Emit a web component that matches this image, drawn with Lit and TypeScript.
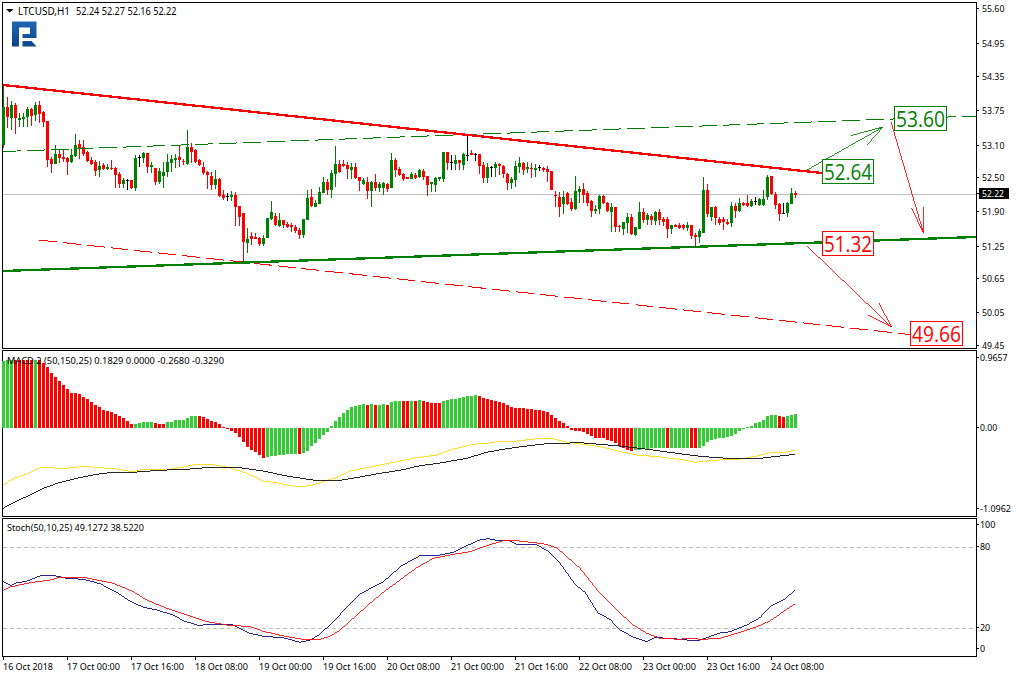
import { LitElement, html, svg, css } from "lit";
import { customElement } from "lit/decorators.js";

const GREEN = "#008000";
const RED = "#ff0000";

// Candles: colour + high, body top, body bottom, low, in 3x crop coordinates.
const C1 = `g255,320,435,443 r290,322,352,385 g303,315,353,390 r310,315,355,402 g340,353,360,382 g340,350,357,380 g320,326,350,380 r325,327,348,378 g305,315,345,362 r303,315,343,370 r332,335,365,380 r363,363,480,500 r470,477,492,518 g435,462,492,492 r450,462,474,488 r450,472,478,487 r472,474,486,525 g447,465,485,490 g402,435,468,472 r420,433,445,478 r420,442,462,468 r452,456,484,486 r470,481,493,495 r480,485,512,528 g483,498,510,530 r490,494,507,510 g492,501,507,510 r480,503,508,510 r500,504,524,565 r515,523,553,565 g535,540,551,565 k537,541,542,570 r540,540,563,567 g465,474,565,572 k465,472,473,500 g455,459,473,490 r460,460,502,518 g485,495,500,520 r503,503,545,555 g505,513,546,552 g487,516,527,563 g462,486,516,530 g465,476,490,515 g463,474,480,505 r435,472,480,500 r477,483,486,495 g390,440,492,495 r430,442,456,490 r447,450,486,490 r478,479,495,497 r487,500,520,525 r512,516,525,568 r515,527,555,570 g510,537,555,567 r535,537,587,590 r570,586,593,600 k580,589,590,602 g572,585,590,603 r575,585,621,678 r618,618,652,678 r640,640,725,790 g685,717,730,760 r695,707,717,735 r700,712,716,718 r712,713,733,738 g705,714,733,738 g654,654,715,715 g603,636,658,660 r640,648,676,677 g640,660,677,680 r660,660,676,685 r665,672,682,685 r668,675,682,697 r675,680,694,700 r685,690,705,717 g657,657,706,713 g570,595,660,660 r567,592,619,620 g600,610,620,622 g560,576,612,612 g530,546,578,580 r537,546,570,585 g510,520,570,594 g438,492,522,560 r480,492,515,518`;
const C2 = `r120,132,137,140 r125,134,148,176 g128,141,150,178 r128,141,174,177 r171,171,184,212 g175,180,192,195 r172,185,212,237 g183,185,213,261 r162,186,204,213 g187,192,205,217 g186,189,204,225 r190,191,208,215 g98,120,205,205 r115,120,150,172 r140,147,165,168 r160,162,178,182 r171,171,177,177 g155,162,176,178 r160,165,175,177 g148,150,172,175 r148,153,172,180 r168,168,195,228 g187,187,192,216 g170,174,195,216 g170,171,178,182 g96,96,178,185 r96,96,130,150 k106,127,128,150 g105,120,132,150 r120,120,130,150 g100,102,135,150 k44,104,105,122 r90,99,105,106 k98,101,102,122 r102,102,137,162 r127,135,174,188 g130,141,174,188 k137,140,141,172 g126,132,144,172 r128,132,137,165 r135,138,162,173 r158,161,190,210 g170,176,189,208 g122,138,180,200 g110,129,141,160 r125,129,150,165 g125,141,147,160 r128,143,148,173 g133,145,150,172 k135,142,143,152 r140,144,149,155 r138,147,156,185 r153,153,210,210 r212,226,228,262 r216,232,260,291 g212,232,252,283 r215,218,252,256 r235,246,268,272 g168,213,268,270 g198,207,216,250 r188,207,225,250 r214,218,248,258 r240,243,274,291 g255,266,274,283 g225,227,268,283 r225,227,250,251 r247,250,272,276 g250,262,276,335 r262,262,320,335 r316,318,322,336 g305,307,328,345 g280,291,309,338 r283,291,343,345 g320,322,344,348 g246,276,327,328 r265,276,299,310 g280,286,300,315 r282,288,300,315 g272,276,302,315 r267,276,300,315 r290,297,306,317 r290,297,328,354 g315,316,327,342 r312,316,320,322 r310,314,323,328`;
const C3 = `r402,406,413,420 g396,404,415,422 r405,406,437,448 r430,434,440,468 g418,424,441,460 g260,300,428,430 r282,300,372,380 g350,352,382,392 r348,350,385,405 r382,388,398,405 r380,387,397,420 r388,395,402,405 g335,348,398,412 r340,348,362,385 g325,340,362,365 r335,338,344,348 r315,340,348,352 g328,334,347,350 k322,333,334,345 g325,328,345,347 g300,326,345,348 g256,260,320,330 r258,258,312,316 r305,312,345,358 r340,342,372,392 k340,368,369,372 g335,338,370,380 g295,308,342,342 r302,308,316,325`;

type Candle = { c: string; h: number; t: number; b: number; l: number };
const candles: Candle[] = [];
const addCandles = (src: string, off: number) => {
  for (const tok of src.split(" ")) {
    const [h, t, b, l] = tok.slice(1).split(",").map((v) => off + Number(v) / 3);
    candles.push({ c: tok[0], h, t, b, l });
  }
};
addCandles(C1, 0);
addCandles(C2, 120);
addCandles(C3, 90);
const candleColor: Record<string, string> = { g: GREEN, r: RED, k: "#000" };

// MACD histogram: bar end in 3x crop coordinates (offset 345), zero at 248.
const H = [48,46,44,44,44,44,44,44,44,46,55,66,84,97,108,120,133,143,145,148,157,162,172,181,185,195,197,200,207,214,220,229,236,238,234,232,232,232,233,236,236,232,230,226,224,224,218,213,213,213,216,222,227,232,236,245,252,258,265,277,292,305,315,322,330,338,335,333,332,330,329,328,327,327,327,324,318,304,295,282,270,260,243,228,216,205,195,186,183,180,177,180,177,180,180,177,180,171,168,168,168,168,168,168,165,168,171,174,174,174,168,165,162,162,159,156,153,153,150,153,159,162,165,168,171,174,180,186,189,189,189,192,192,195,195,198,201,210,219,228,234,243,255,258,258,261,267,273,279,279,279,285,288,294,303,309,315,318,315,315,312,312,309,309,309,309,309,309,309,309,309,309,309,309,309,303,291,285,282,279,279,276,273,267,258,251,246,242,234,232,225,213,210,210,213,216,213,210,207];
const redRanges = [[3,7],[9,32],[38,40],[49,65],[74,74],[91,91],[93,93],[96,96],[100,101],[103,103],[105,109],[119,157],[166,166],[172,173],[194,195]];
const isRed = (i: number) => redRanges.some(([a, b]) => i >= a && i <= b);

// Polylines as x,y in 3x crops: [crop x origin, crop y origin, "x,y x,y ..."]
type Crop = [number, number, string];
const poly = (crops: Crop[]) =>
  crops
    .map(([ox, oy, s]) =>
      s
        .split(" ")
        .map((p) => {
          const [x, y] = p.split(",").map(Number);
          return `${(ox + x / 3).toFixed(1)},${(oy + y / 3).toFixed(1)}`;
        })
        .join(" ")
    )
    .join(" ");

const signal = poly([
  [0, 345, "9,424 24,410 48,398 80,388 120,368 200,370 250,364 300,368 350,372 395,380 430,374 500,374 550,366 590,358 630,358 670,364 700,372 740,385 790,408 830,413 870,422 905,425 940,420 985,405 1020,394"],
  [340, 345, "0,392 30,378 60,372 110,362 170,350 230,338 290,330 340,312 400,298 440,295 480,289 530,288 590,281 640,281 680,292 730,298 790,307 850,322 895,331 940,334 1020,343"],
  [680, 345, "0,343 45,352 100,346 180,342 230,333 270,323 315,322 345,316"],
]);
const macd = poly([
  [0, 345, "9,490 50,468 90,450 130,430 175,414 230,400 290,388 340,382 410,381 480,376 570,372 630,367 720,368 790,378 860,393 945,406 1020,406"],
  [340, 345, "0,406 60,396 120,385 180,376 240,362 300,354 380,340 440,322 500,311 560,303 620,296 660,295 720,293 780,298 830,302 900,310 960,318 1020,326"],
  [680, 345, "0,326 60,334 140,340 240,340 345,328"],
]);
const stochMain = poly([
  [0, 515, "9,199 33,211 50,203 80,199 120,183 160,181 200,190 250,193 300,206 350,232 390,258 430,277 470,285 520,300 550,317 600,333 620,327 700,330 750,355 790,364 850,368 900,382 930,375 960,358 1020,300"],
  [340, 515, "0,298 60,237 130,200 185,152 240,122 290,122 340,112 415,76 445,71 470,76 510,78 530,88 590,90 625,108 660,145 705,208 735,232 775,295 810,313 840,345 880,366 920,380 945,368 990,370 1020,373"],
  [680, 515, "0,373 50,378 80,368 120,354 150,350 200,330 240,308 270,275 310,255 345,226"],
]);
const stochSignal = poly([
  [0, 515, "9,226 30,216 90,203 150,195 180,187 250,187 340,205 400,230 440,255 500,280 560,300 620,320 680,330 750,335 790,349 860,365 910,373 960,373 990,364 1020,346"],
  [340, 515, "0,345 40,310 90,265 130,232 180,195 230,158 280,130 340,118 390,110 440,92 490,77 530,77 610,86 650,98 720,160 780,235 830,285 880,330 920,355 960,370 1020,373"],
  [680, 515, "0,373 20,370 70,373 120,370 180,352 230,335 270,318 310,290 345,267"],
]);

const priceTicks: [string, number][] = [["55.60",9],["54.95",44],["54.35",77],["53.75",111],["53.10",146],["52.50",178],["51.90",212],["51.25",247],["50.65",279],["50.05",313],["49.45",346]];
const macdTicks: [string, number][] = [["0.9657",358],["0.00",428],["-1.0962",509]];
const stochTicks: [string, number][] = [["100",525],["80",547],["20",628],["0",649]];
const times = ["16 Oct 2018","17 Oct 00:00","17 Oct 16:00","18 Oct 08:00","19 Oct 00:00","19 Oct 16:00","20 Oct 08:00","21 Oct 00:00","21 Oct 16:00","22 Oct 08:00","23 Oct 00:00","23 Oct 16:00","24 Oct 08:00"];

const levelBoxes = [
  { t: "53.60", x: 894, y: 106, w: 52, h: 24, c: GREEN },
  { t: "52.64", x: 822, y: 159, w: 51, h: 24, c: GREEN },
  { t: "51.32", x: 822, y: 231, w: 51, h: 24, c: RED },
  { t: "49.66", x: 910, y: 321, w: 52, h: 24, c: RED },
];

const arrows: { c: string; d: string }[] = [
  { c: GREEN, d: "M807 170L883 127M851 135.5L883 127L867 145" },
  { c: RED, d: "M891 122L923.5 233M911.5 208L923.5 233L923.5 207" },
  { c: RED, d: "M807 246L891.5 327M868 315L891.5 327L879 303" },
];

const labelWidth = (t: string) => {
  const digits = t.replace(/[^0-9]/g, "").length;
  return digits * 5.1 + (t.includes(".") ? 2 : 0) + (t.startsWith("-") ? 3.5 : 0);
};

@customElement("app-root")
export class AppRoot extends LitElement {
  static styles = css`
    :host {
      display: block;
      width: 1016px;
      height: 677px;
      background: #fff;
      overflow: hidden;
      color: #000;
      font-family: "Noto Sans", "Liberation Sans", sans-serif;
    }
    .chart {
      display: flex;
      flex-direction: column;
      gap: 1px;
      padding: 2px 0 0 2px;
    }
    .row {
      display: flex;
    }
    .pane {
      border: 1px solid #000;
      width: 973px;
      flex: none;
    }
    .pane svg,
    .axis svg {
      display: block;
      overflow: visible;
    }
    .axis {
      width: 39px;
      flex: none;
    }
    .main { height: 345px; }
    .osc { height: 165px; }
    .sto { height: 137px; }
    .time {
      margin-top: -1px;
      height: 20px;
    }
    .time svg {
      display: block;
    }
    text {
      font-family: "Noto Sans", "Liberation Sans", sans-serif;
      font-size: 9.6px;
      fill: #000;
    }
    .head {
      font-size: 10.3px;
    }
    .big {
      font-family: "Open Sans", "Noto Sans", sans-serif;
      font-size: 22.5px;
    }
    .crisp {
      shape-rendering: crispEdges;
    }
    .thin {
      stroke-width: 0.85;
    }
    .tick {
      stroke: #000;
      stroke-width: 1;
    }
  `;

  private axis(ticks: [string, number][], top: number, h: number, textX: number) {
    return html`<div class="axis">
      <svg width="39" height=${h} viewBox="977 ${top} 39 ${h}">
        <g class="crisp">
          ${ticks.map(([, y]) => svg`<line class="tick" x1="976" x2="979" y1=${y + 0.5} y2=${y + 0.5}></line>`)}
        </g>
        ${ticks.map(
          ([t, y]) => svg`<text x=${textX} y=${y + 4} textLength=${labelWidth(t)} lengthAdjust="spacingAndGlyphs">${t}</text>`
        )}
        ${top === 3
          ? svg`<line class="tick crisp" x1="976" x2="979" y1="194.5" y2="194.5"></line>
                <rect class="crisp" x="979" y="189" width="30" height="11" fill="#000"></rect>
                <text x="982" y="198" textLength="22" lengthAdjust="spacingAndGlyphs" style="fill:#fff">52.22</text>`
          : ""}
      </svg>
    </div>`;
  }

  private logo() {
    return svg`<defs>
        <linearGradient id="lg" x1="0" y1="0" x2="0" y2="1">
          <stop offset="0" stop-color="#1e66b4"></stop>
          <stop offset="1" stop-color="#0d4688"></stop>
        </linearGradient>
      </defs>
      <path fill="url(#lg)" d="M12 21.5H36.5V38H22.5V34H30V27.5H19V46.5H12Z M22.5 41H31.5L36.5 46.5H22.5Z"></path>`;
  }

  private mainPane() {
    return svg`
      <line class="crisp" x1="3" x2="976" y1="194.5" y2="194.5" stroke="#c0c0c0"></line>
      <g class="crisp">
        ${candles.map((k, i) => {
          const x = 3 + 4 * i;
          const col = candleColor[k.c];
          const top = Math.round(k.t);
          const h = Math.max(1, Math.round(k.b) - top);
          return svg`<rect x=${x} y=${Math.round(k.h)} width="1" height=${Math.max(1, Math.round(k.l) - Math.round(k.h))} fill=${col}></rect>
            ${k.c === "k"
              ? svg`<rect x=${x - 1} y=${top} width="3" height="1" fill=${col}></rect>`
              : svg`<rect x=${x - 1} y=${top} width="3" height=${h} fill=${col}></rect>`}`;
        })}
      </g>
      <g class="crisp" fill="none">
        <line x1="3" y1="151.5" x2="976" y2="116" stroke=${GREEN} stroke-dasharray="18 6"></line>
        <line x1="39" y1="240" x2="910" y2="334.5" stroke=${RED} stroke-dasharray="18 6"></line>
        <line x1="3" y1="85" x2="822" y2="173" stroke=${RED} stroke-width="2.3"></line>
        <line x1="3" y1="271" x2="976" y2="237" stroke=${GREEN} stroke-width="2.3"></line>
        ${arrows.map((a) => svg`<path class="thin" d=${a.d} stroke=${a.c}></path>`)}
      </g>
      ${levelBoxes.map(
        (b) => svg`<rect class="crisp" x=${b.x + 0.5} y=${b.y + 0.5} width=${b.w} height=${b.h} fill="#fff" stroke=${b.c}></rect>
          <text class="big" x=${b.x + 2} y=${b.y + 20.5} textLength=${b.w - 3} lengthAdjust="spacingAndGlyphs" style="fill:${b.c}">${b.t}</text>`
      )}
      ${this.logo()}
      <path d="M6 9H13.5L9.75 12.5Z" fill="#000"></path>
      <text class="head" x="18" y="14.5" textLength="52" lengthAdjust="spacingAndGlyphs">LTCUSD,H1</text>
      <text class="head" x="76" y="14.5" textLength="100.5" lengthAdjust="spacingAndGlyphs">52.24 52.27 52.16 52.22</text>`;
  }

  private macdPane() {
    const zero = 428;
    return svg`
      <g class="crisp">
        ${H.map((z, i) => {
          const y = Math.round(345 + z / 3);
          const top = Math.min(y, zero);
          const h = Math.max(1, Math.abs(y - zero));
          return svg`<rect x=${2 + 4 * i} y=${top} width="3" height=${h} fill=${isRed(i) ? RED : "#32cd32"}></rect>`;
        })}
      </g>
      <g class="crisp" fill="none">
        <polyline class="thin" points=${signal} stroke="#ffd700"></polyline>
        <polyline class="thin" points=${macd} stroke="#000"></polyline>
      </g>
      <text x="7" y="363.5" textLength="217" lengthAdjust="spacingAndGlyphs">MACD 2 (50,150,25) 0.1829 0.0000 -0.2680 -0.3290</text>`;
  }

  private stochPane() {
    return svg`
      <g class="crisp" stroke="#c0c0c0" stroke-dasharray="4 3">
        <line x1="3" x2="976" y1="547.5" y2="547.5"></line>
        <line x1="3" x2="976" y1="628.5" y2="628.5"></line>
      </g>
      <g class="crisp" fill="none">
        <polyline class="thin" points=${stochMain} stroke="#000080"></polyline>
        <polyline class="thin" points=${stochSignal} stroke=${RED}></polyline>
      </g>
      <text x="7" y="530.5" textLength="137" lengthAdjust="spacingAndGlyphs">Stoch(50,10,25) 49.1272 38.5220</text>`;
  }

  render() {
    return html`<div class="chart">
      <div class="row">
        <div class="pane main">
          <svg width="973" height="345" viewBox="3 3 973 345">${this.mainPane()}</svg>
        </div>
        ${this.axis(priceTicks, 3, 345, 982)}
      </div>
      <div class="row">
        <div class="pane osc">
          <svg width="973" height="165" viewBox="3 351 973 165">${this.macdPane()}</svg>
        </div>
        ${this.axis(macdTicks, 351, 165, 980)}
      </div>
      <div class="row">
        <div class="pane sto">
          <svg width="973" height="137" viewBox="3 519 973 137">${this.stochPane()}</svg>
        </div>
        ${this.axis(stochTicks, 519, 137, 980)}
      </div>
      <div class="time">
        <svg width="1014" height="20" viewBox="2 657 1014 20">
          <g class="crisp">
            ${times.map((_, i) => svg`<line class="tick" x1=${3.5 + 64 * i} x2=${3.5 + 64 * i} y1="656" y2="660"></line>`)}
          </g>
          ${times.map(
            (t, i) => svg`<text x=${3 + 64 * i} y="669.5" textLength=${i === 0 ? 50 : 53} lengthAdjust="spacingAndGlyphs">${t}</text>`
          )}
        </svg>
      </div>
    </div>`;
  }
}
